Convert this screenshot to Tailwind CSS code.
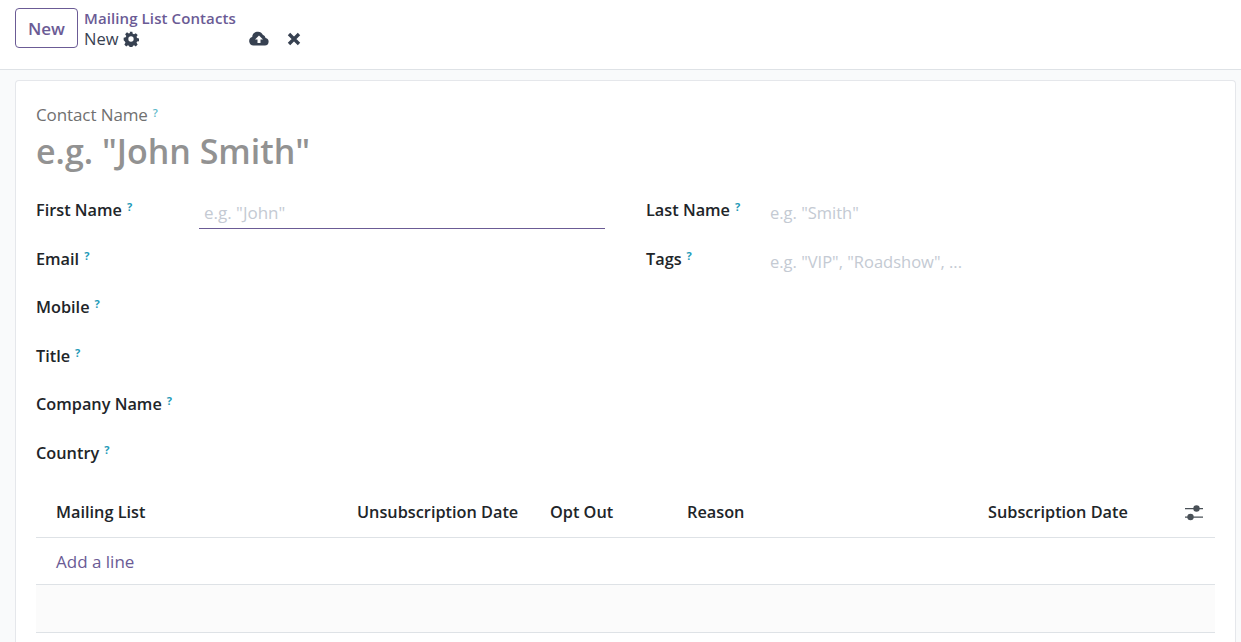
<!DOCTYPE html>
<html lang="en">
<head>
  <meta charset="UTF-8" />
  <title>Mailing List Contacts</title>
  <script src="https://cdn.jsdelivr.net/npm/@tailwindcss/browser@4"></script>
</head>
<body class="h-[642px] overflow-hidden bg-[#f9fafb] font-['Open_Sans',sans-serif] text-[#212529]">

  <!-- Control panel -->
  <header class="h-[70px] bg-white border-b border-[#dee2e6] pl-[15px] pt-2 flex items-start">
    <button class="w-[63px] h-10 border border-[#6b5b95] rounded pt-[1px] text-[#6b5b95] text-[17px] font-semibold">New</button>
    <div class="ml-[6px] w-[165px]">
      <div class="text-[#6b5b95] text-[15px] font-semibold leading-[21px] tracking-[0.1px]">Mailing List Contacts</div>
      <div class="flex items-center gap-[5px] -mt-[1px] text-[16.500px] leading-[21px] text-[#374151]">
        New
        <svg class="w-[16px] h-[16px]" viewBox="0 0 24 24" fill="#374151"><path fill-rule="evenodd" d="M10 1h4l.6 3 2 .9 2.600-1.700 2.800 2.800-1.700 2.600.8 2 2.900.6v4l-2.900.6-.8 2 1.700 2.600-2.800 2.800-2.600-1.700-2 .9-.6 2.900h-4l-.6-2.900-2-.9-2.600 1.700-2.800-2.800 1.700-2.600-.9-2L1 14v-4l3-.6.9-2-1.700-2.600L6 2l2.600 1.700 2-.8zM12 8a4 4 0 1 0 0 8 4 4 0 0 0 0-8z"/></svg>
      </div>
    </div>
    <div class="flex items-center mt-[22px] gap-[18px]">
      <svg class="w-5 h-4" viewBox="0 0 20 16" fill="#374151"><path fill-rule="evenodd" d="M4.500 15.500A4.300 4.300 0 0 1 3.200 7.100 5.600 5.600 0 0 1 13.800 4.800a4 4 0 0 1 2.800 3.200 3.800 3.800 0 0 1-1.100 7.500zM10 5.500 6 9.500h2.500v3.500h3V9.500H14z"/></svg>
      <svg class="w-[14px] h-[14px] mt-[1px]" viewBox="0 0 14 14" fill="none" stroke="#374151" stroke-width="3.400"><path d="M2 2l10 10M12 2 2 12"/></svg>
    </div>
  </header>

  <!-- Form sheet -->
  <main class="ml-[15px] mr-[5px] mt-[10px] h-[562px] bg-white border border-b-0 border-[#e5e7eb] rounded-t pt-[21px] px-5">
    <div class="text-[#707070] text-[17px] leading-[26px] flex tracking-[-0.1px]">Contact Name<span class="ml-[5px] -mt-[2px] text-[11px] font-semibold text-[#5bb8c9]">?</span></div>
    <h1 class="text-[#929292] text-[34px] font-semibold leading-[46px]">e.g. "John Smith"</h1>

    <div class="grid grid-cols-[610px_1fr] mt-[21px]">
      <div>
        <div class="h-[48.500px] flex">
          <label class="w-[163px] pt-[3px] text-[16.300px] font-semibold leading-6 flex">First Name<span class="ml-[5px] -mt-[3px] text-[11px] font-bold text-[#1f9bb8]">?</span></label>
          <div class="w-[406px] h-[34px] border-b border-[#6b5b95] px-[5px] pt-[6px] text-[17px] leading-6 text-[#c4cad3]">e.g. "John"</div>
        </div>
        <div class="h-[48.500px] pt-[3px]"><label class="text-[16.300px] font-semibold leading-6 flex">Email<span class="ml-[5px] -mt-[3px] text-[11px] font-bold text-[#1f9bb8]">?</span></label></div>
        <div class="h-[48.500px] pt-[3px]"><label class="text-[16.300px] font-semibold leading-6 flex">Mobile<span class="ml-[5px] -mt-[3px] text-[11px] font-bold text-[#1f9bb8]">?</span></label></div>
        <div class="h-[48.500px] pt-[3px]"><label class="text-[16.300px] font-semibold leading-6 flex">Title<span class="ml-[5px] -mt-[3px] text-[11px] font-bold text-[#1f9bb8]">?</span></label></div>
        <div class="h-[48.500px] pt-[3px]"><label class="text-[16.300px] font-semibold leading-6 flex">Company Name<span class="ml-[5px] -mt-[3px] text-[11px] font-bold text-[#1f9bb8]">?</span></label></div>
        <div class="h-[48.500px] pt-[3px]"><label class="text-[16.300px] font-semibold leading-6 flex">Country<span class="ml-[5px] -mt-[3px] text-[11px] font-bold text-[#1f9bb8]">?</span></label></div>
      </div>
      <div>
        <div class="h-[48.500px] flex">
          <label class="w-[119px] pt-[3px] text-[16.300px] font-semibold leading-6 flex">Last Name<span class="ml-[5px] -mt-[3px] text-[11px] font-bold text-[#1f9bb8]">?</span></label>
          <div class="pt-[6px] px-[5px] text-[16.500px] leading-6 text-[#c4cad3]">e.g. "Smith"</div>
        </div>
        <div class="h-[48.500px] flex">
          <label class="w-[119px] pt-[3px] text-[16.300px] font-semibold leading-6 flex">Tags<span class="ml-[5px] -mt-[3px] text-[11px] font-bold text-[#1f9bb8]">?</span></label>
          <div class="pt-[6px] px-[5px] text-[16.500px] leading-6 text-[#c4cad3]">e.g. "VIP", "Roadshow", ...</div>
        </div>
      </div>
    </div>

    <!-- One2many list -->
    <div class="mt-[2px] text-[16.300px]">
      <div class="h-[50px] border-b border-[#dee2e6] grid grid-cols-[321px_193px_137px_301px_1fr_31px] items-center font-semibold">
        <div class="pl-5">Mailing List</div>
        <div>Unsubscription Date</div>
        <div>Opt Out</div>
        <div>Reason</div>
        <div>Subscription Date</div>
        <svg class="w-[20px] h-[18px]" viewBox="0 0 20 18" fill="#495057"><path d="M1 4h18v1.200H1zM1 12.500h18v1.200H1z"/><circle cx="12.500" cy="4.500" r="3.200"/><circle cx="6.500" cy="13" r="3.200"/></svg>
      </div>
      <div class="h-[47px] border-b border-[#dee2e6] pl-5 pt-[2px] flex items-center text-[17px] text-[#6b5b95]">Add a line</div>
      <div class="h-12 border-b border-[#dee2e6] bg-[#fbfbfb]"></div>
    </div>
  </main>
</body>
</html>
